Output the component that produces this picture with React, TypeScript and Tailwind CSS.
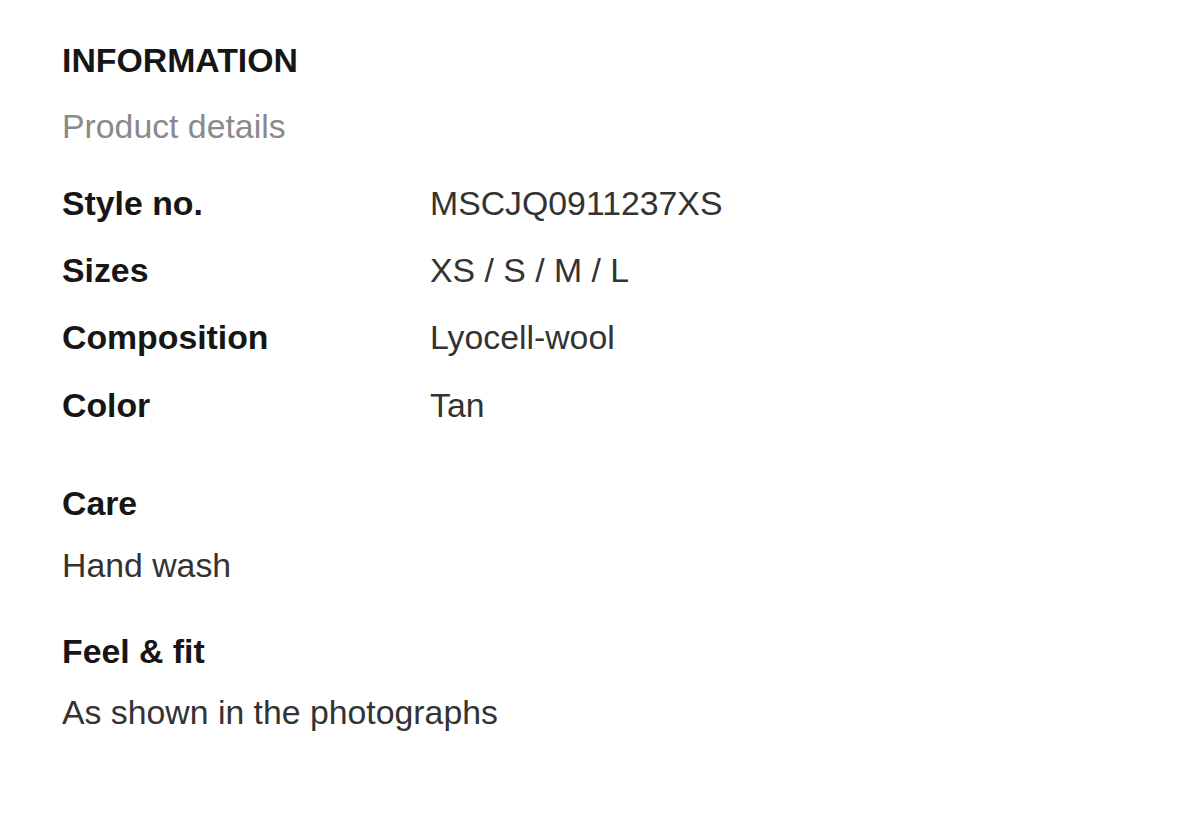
import React from "react";

const rows: [string, string][] = [
  ["Style no.", "MSCJQ0911237XS"],
  ["Sizes", "XS / S / M / L"],
  ["Composition", "Lyocell-wool"],
  ["Color", "Tan"],
];

export default function App() {
  return (
    <div className="min-h-[823px] w-full bg-white pl-[62px] pt-[40px] font-['Liberation_Sans',Arial,Helvetica,sans-serif] text-[33.8px] leading-[40px]">
      <h2 className="font-bold text-[#161616]">INFORMATION</h2>
      <p className="mt-[26px] text-[#8a8a8a]">Product details</p>
      <div className="mt-[37px] grid grid-cols-[368px_1fr] gap-y-[27.2px]">
        {rows.map(([k, v]) => (
          <React.Fragment key={k}>
            <div className="font-bold text-[#161616]">{k}</div>
            <div className="text-[#333333]">{v}</div>
          </React.Fragment>
        ))}
      </div>
      <h3 className="mt-[58px] font-bold text-[#161616]">Care</h3>
      <p className="mt-[22px] text-[#333333]">Hand wash</p>
      <h3 className="mt-[46px] font-bold text-[#161616]">Feel &amp; fit</h3>
      <p className="mt-[21px] text-[#333333]">As shown in the photographs</p>
    </div>
  );
}
